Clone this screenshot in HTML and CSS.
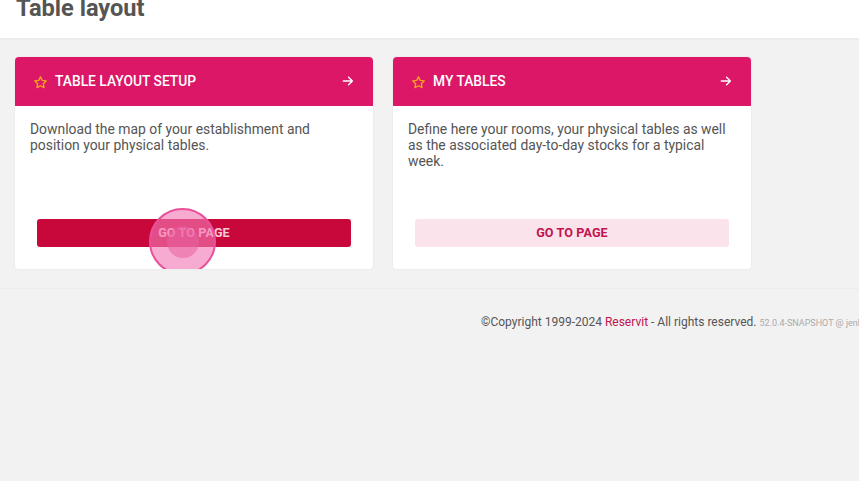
FILE: index.html
```html
<!DOCTYPE html>
<html lang="en">
<head>
    <meta charset="UTF-8">
    <meta name="viewport" content="width=device-width, initial-scale=1.0">
    <title>Table layout</title>
    <link rel="stylesheet" href="styles.css">
</head>
<body>
    <header class="page-header">
        <h1 class="page-title">Table layout</h1>
    </header>

    <main class="tiles">
        <section class="tile">
            <div class="tile-head">
                <svg class="tile-star" viewBox="0 0 24 24" width="15" height="15">
                    <path d="M12 2.8l2.8 5.8 6.3.9-4.6 4.4 1.1 6.3L12 17.2l-5.6 3 1.1-6.3-4.6-4.4 6.3-.9z" fill="none" stroke="#f7a21b" stroke-width="2.2" stroke-linejoin="round"/>
                </svg>
                <span class="tile-name">Table layout setup</span>
                <svg class="tile-arrow" viewBox="0 0 24 24" width="14" height="14">
                    <path d="M4 12h15M13 5.5l6.5 6.5-6.5 6.5" fill="none" stroke="#fff" stroke-width="2.4" stroke-linecap="round" stroke-linejoin="round"/>
                </svg>
            </div>
            <div class="tile-body">
                <p class="tile-text">Download the map of your establishment and position your physical tables.</p>
                <button class="tile-button tile-button--active">
                    Go to page
                    <span class="click-mark"><span class="click-dot"></span></span>
                </button>
            </div>
        </section>

        <section class="tile">
            <div class="tile-head">
                <svg class="tile-star" viewBox="0 0 24 24" width="15" height="15">
                    <path d="M12 2.8l2.8 5.8 6.3.9-4.6 4.4 1.1 6.3L12 17.2l-5.6 3 1.1-6.3-4.6-4.4 6.3-.9z" fill="none" stroke="#f7a21b" stroke-width="2.2" stroke-linejoin="round"/>
                </svg>
                <span class="tile-name">My tables</span>
                <svg class="tile-arrow" viewBox="0 0 24 24" width="14" height="14">
                    <path d="M4 12h15M13 5.5l6.5 6.5-6.5 6.5" fill="none" stroke="#fff" stroke-width="2.4" stroke-linecap="round" stroke-linejoin="round"/>
                </svg>
            </div>
            <div class="tile-body">
                <p class="tile-text">Define here your rooms, your physical tables as well as the associated day-to-day stocks for a typical week.</p>
                <button class="tile-button">Go to page</button>
            </div>
        </section>
    </main>

    <footer class="page-footer">
        <span class="copyright">&copy;Copyright 1999-2024 <a href="#">Reservit</a> - All rights reserved.</span>
        <span class="build">52.0.4-SNAPSHOT @ jenkins-build</span>
    </footer>
</body>
</html>
```

FILE: styles.css
```css
* {
    box-sizing: border-box;
    margin: 0;
    padding: 0;
}

body {
    height: 100vh;
    overflow: hidden;
    background: #f2f2f2;
    font-family: Roboto, "Liberation Sans", sans-serif;
    color: #555;
}

/* bandeau titre */
.page-header {
    height: 38px;
    background: #fff;
    box-shadow: 0 1px 3px rgba(0, 0, 0, 0.06);
    padding-left: 16px;
    overflow: hidden;
}

.page-title {
    margin-top: -7px;
    font-size: 23.6px;
    font-weight: 700;
    line-height: 30px;
    color: #555;
}

/* cartes */
.tiles {
    display: flex;
    gap: 20px;
    padding: 19px 15px 19px;
    border-bottom: 1px solid #ececec;
}

.tile {
    width: 358px;
    height: 212px;
    background: #fff;
    border-radius: 4px;
    box-shadow: 0 0 2px rgba(0, 0, 0, 0.08);
    display: flex;
    flex-direction: column;
    overflow: hidden;
}

.tile-head {
    height: 49px;
    background: #dc1768;
    display: flex;
    align-items: center;
    padding: 0 18px 1px 18px;
    color: #fff;
}

.tile-star {
    margin-right: 7px;
    margin-top: 2px;
}

.tile-name {
    flex: 1;
    font-size: 13.8px;
    font-weight: 500;
    text-transform: uppercase;
}

.tile-body {
    flex: 1;
    display: flex;
    flex-direction: column;
    justify-content: space-between;
    padding: 15px 22px 22px 15px;
}

.tile-text {
    font-size: 13.9px;
    line-height: 16px;
    color: #555;
}

.tile-button {
    position: relative;
    height: 28px;
    margin-left: 7px;
    border: none;
    border-radius: 3px;
    background: #fbe3ec;
    color: #c0134f;
    font-family: inherit;
    font-size: 12.6px;
    font-weight: 700;
    letter-spacing: 0.1px;
    text-transform: uppercase;
    line-height: 26px;
    cursor: pointer;
}

.tile-button--active {
    background: #c8083a;
    color: #f9c9da;
}

/* marque du clic */
.click-mark {
    position: absolute;
    left: 112px;
    top: -11px;
    width: 67px;
    height: 67px;
    border-radius: 50%;
    border: 2px solid #e9509a;
    background: rgba(243, 120, 180, 0.62);
    display: flex;
    justify-content: center;
    align-items: center;
}

.click-dot {
    width: 32px;
    height: 32px;
    border-radius: 50%;
    background: rgba(232, 98, 160, 0.55);
}

/* pied de page */
.page-footer {
    display: flex;
    align-items: baseline;
    gap: 3px;
    padding: 26px 0 0 481px;
    white-space: nowrap;
    font-size: 12px;
}

.page-footer a {
    color: #c0134f;
    text-decoration: none;
}

.build {
    font-size: 9px;
    color: #aaa;
}
```
